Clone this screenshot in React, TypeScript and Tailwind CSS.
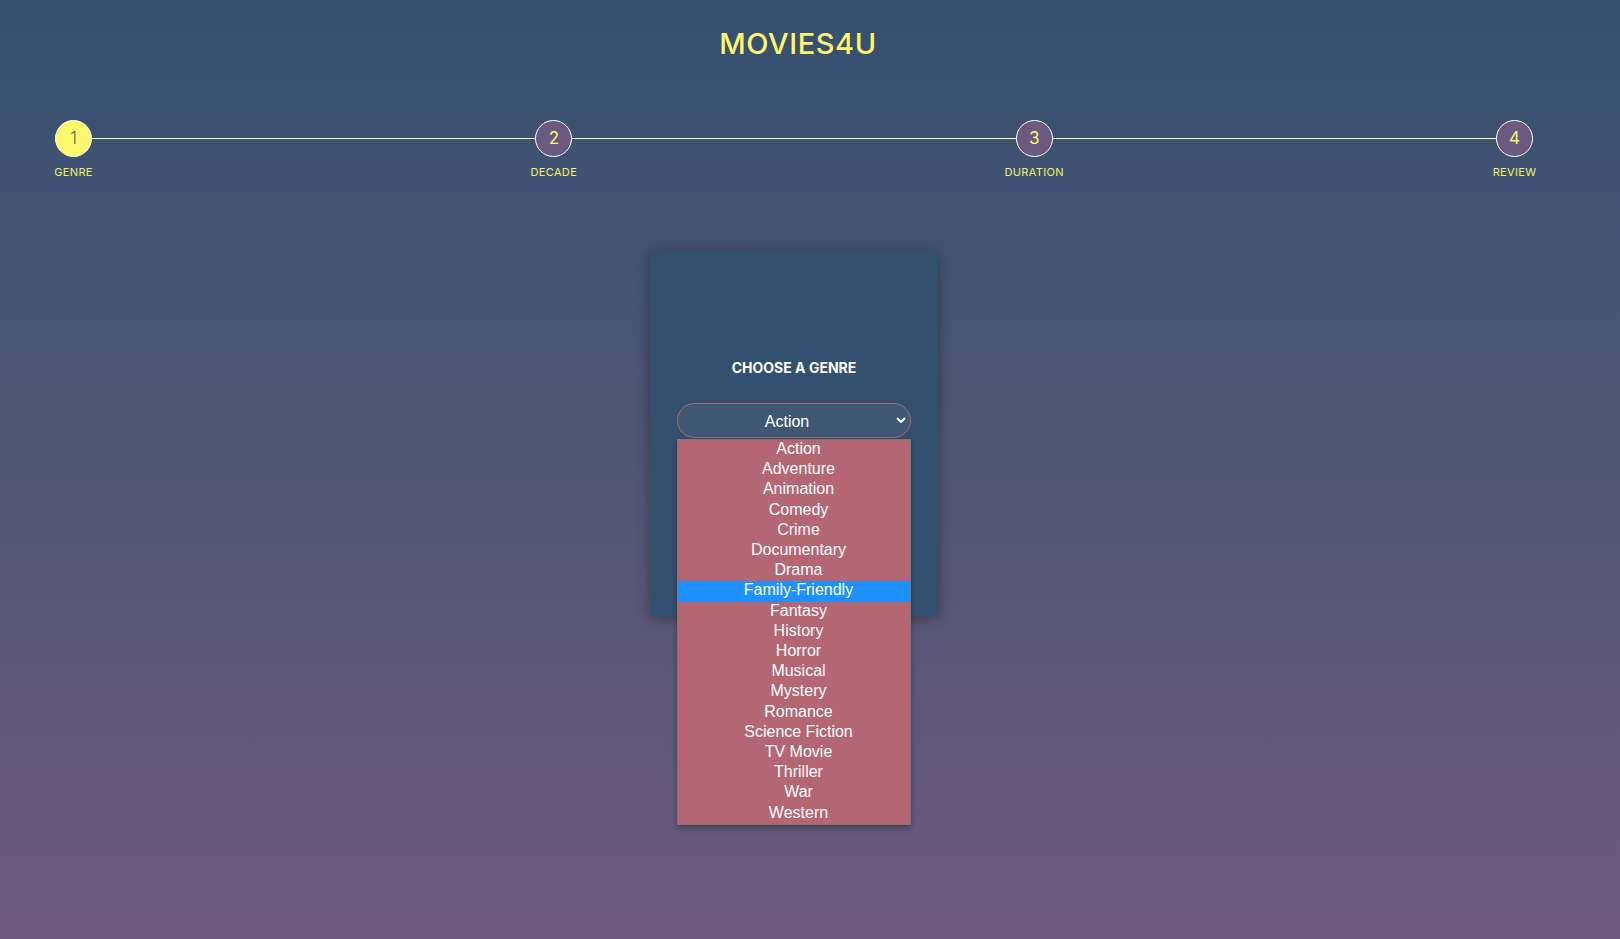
import React from "react";

const genres = [
  "Action",
  "Adventure",
  "Animation",
  "Comedy",
  "Crime",
  "Documentary",
  "Drama",
  "Family-Friendly",
  "Fantasy",
  "History",
  "Horror",
  "Musical",
  "Mystery",
  "Romance",
  "Science Fiction",
  "TV Movie",
  "Thriller",
  "War",
  "Western",
];

const steps = [
  { n: "1", label: "GENRE", active: true },
  { n: "2", label: "DECADE", active: false },
  { n: "3", label: "DURATION", active: false },
  { n: "4", label: "REVIEW", active: false },
];

function Step({ n, label, active }: { n: string; label: string; active: boolean }) {
  return (
    <div className="flex w-[37px] shrink-0 flex-col items-center">
      <div
        className={
          active
            ? "flex h-[37px] w-[37px] items-center justify-center rounded-full border border-white bg-[#fdf86b] text-[17px] font-light text-[#6b5a7c]"
            : "flex h-[37px] w-[37px] items-center justify-center rounded-full border border-white bg-[#6a5a7f] text-[17px] font-normal text-[#fdf66c]"
        }
      >
        {n}
      </div>
      <div className="mt-[8px] whitespace-nowrap text-[11px] font-normal leading-[14px] tracking-[0.03em] text-[#f3ee6a]">
        {label}
      </div>
    </div>
  );
}

export default function App() {
  return (
    <div className="min-h-screen w-full bg-linear-to-b from-[#34506f] to-[#6c5a7c] font-['Inter',sans-serif]">
      <div className="flex min-h-[939px] w-[1588px] flex-col items-center">
        <h1 className="ml-[8px] mt-[26px] text-[29px] font-medium leading-[36px] tracking-[0.02em] text-[#fdf66c]">
          MOVIES4U
        </h1>

        <div className="mt-[58px] flex w-[1478px] items-start">
          {steps.map((s, i) => (
            <React.Fragment key={s.n}>
              <Step n={s.n} label={s.label} active={s.active} />
              {i < steps.length - 1 && <div className="mt-[18px] h-px flex-1 bg-white" />}
            </React.Fragment>
          ))}
        </div>

        <div className="mt-[72px] flex h-[365px] w-[288px] flex-col items-center rounded-[3px] bg-[#34506f] pt-[107px] shadow-[0_2px_14px_rgba(0,0,0,0.35)]">
          <div className="text-[14px] font-bold leading-[20px] text-white">CHOOSE A GENRE</div>

          <div className="relative mt-[25px] h-[35px] w-[234px]">
            <div className="flex h-full w-full items-center rounded-full border border-[#b8646f] bg-[#3e5874] font-['Liberation_Sans',Arial,sans-serif] text-[16px] text-white">
              <span className="flex-1 pt-[3px] text-center">Action</span>
              <svg width="10" height="7" viewBox="0 0 10 7" className="mr-[4px]">
                <path d="M1.5 1.5 L5 5 L8.5 1.5" fill="none" stroke="white" strokeWidth="2" strokeLinecap="round" strokeLinejoin="round" />
              </svg>
            </div>

            <div className="absolute left-0 top-[36px] z-10 w-[234px] border border-[#7d7474] bg-[#b56673] font-['Liberation_Sans',Arial,sans-serif] text-[16px] text-white shadow-[0_3px_6px_rgba(0,0,0,0.3)]">
              {genres.map((g) => (
                <div
                  key={g}
                  className={
                    g === "Family-Friendly"
                      ? "bg-[#1e90ff] pb-[3px] pl-[9px] text-center leading-[17.2px]"
                      : "pb-[3px] pl-[9px] text-center leading-[17.2px]"
                  }
                >
                  {g}
                </div>
              ))}
            </div>
          </div>
        </div>
      </div>
    </div>
  );
}
